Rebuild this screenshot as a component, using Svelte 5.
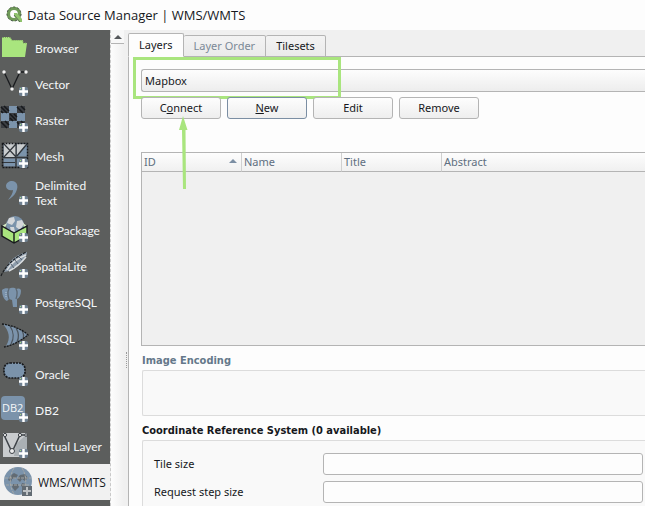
<script>
  const sources = [
    { id: 'browser', label: 'Browser' },
    { id: 'vector', label: 'Vector' },
    { id: 'raster', label: 'Raster' },
    { id: 'mesh', label: 'Mesh' },
    { id: 'text', label: 'Delimited Text' },
    { id: 'geopackage', label: 'GeoPackage' },
    { id: 'spatialite', label: 'SpatiaLite' },
    { id: 'postgres', label: 'PostgreSQL' },
    { id: 'mssql', label: 'MSSQL' },
    { id: 'oracle', label: 'Oracle' },
    { id: 'db2', label: 'DB2' },
    { id: 'virtual', label: 'Virtual Layer' },
    { id: 'wms', label: 'WMS/WMTS' }
  ];
  let current = $state('wms');
  let connection = $state('Mapbox');
</script>

<div class="window">
  <header>
    <svg class="logo" width="18" height="18" viewBox="0 0 18 18" aria-hidden="true">
      <circle cx="8" cy="8" r="5.6" fill="none" stroke="#6f9a58" stroke-width="3.4" />
      <circle cx="8" cy="8" r="7" fill="none" stroke="#4f5a50" stroke-width="1" stroke-dasharray="2 2" />
      <path d="M8 7h3l5 6v3h-3l-5-6z" fill="#8fc36c" />
      <path d="M8 9l6 7" stroke="#5c6b58" stroke-width="1" />
    </svg>
    <h1>Data Source Manager | WMS/WMTS</h1>
  </header>

  <div class="content">
    <nav aria-label="Data sources">
      {#each sources as s (s.id)}
        <button class="source" class:selected={current === s.id} onclick={() => (current = s.id)}>
          <svg width="28" height="28" viewBox="0 0 28 28" aria-hidden="true">
            {#if s.id === 'browser'}
              <path d="M1 4l1-1h7l2 3h11v3l4 0-2 14H1z" fill="#a9e57e" />
              <path d="M2 3.500h7l2 3h11v2.500h4" fill="none" stroke="#7fa861" stroke-dasharray="1 1" />
            {:else if s.id === 'vector'}
              <path d="M3 2l8 17 8-17h6" fill="none" stroke="#191b1e" stroke-width="1.300" />
              <g fill="#f2f2f2"><circle cx="3" cy="2" r="1.700" /><circle cx="11" cy="19" r="1.700" /><circle cx="18" cy="2" r="1.700" /><circle cx="25" cy="2" r="1.700" /></g>
            {:else if s.id === 'raster'}
              <path d="M0 0h24v22H0z" fill="#3b3e43" />
              <path d="M8 0h8v7H8zM0 7h8v8H0zM16 7h8v8h-8zM8 15h8v7H8z" fill="#7b93ab" />
              <path d="M0 1l6 6M3 0l5 5M0 5l2 2M16 1l6 6M20 0l4 4M9 8l6 6M9 12l3 3M13 8l3 3M0 16l6 6M4 15l4 4M16 16l6 6M20 15l4 4" stroke="#17191c" stroke-width="1.500" />
            {:else if s.id === 'mesh'}
              <path d="M2 1h25v24H2z" fill="#66727e" />
              <path d="M3 1h12v14H3z" fill="#c9ccce" />
              <path d="M16 14L26 2v12zM3 17h11v7H3zM16 17h10v7H16z" fill="#7b93ab" />
              <path d="M16 2h9L16 13z" fill="#c9ccce" />
              <path d="M3 2l12 13M15 2L3 15M16 14L26 2M15 1v24M2 15.500h25M2 20.500h12" fill="none" stroke="#33383d" stroke-width="1.200" />
              <rect x="1.500" y="1.500" width="25" height="24" fill="none" stroke="#15171a" stroke-width="1.500" stroke-dasharray="2 1" />
            {:else if s.id === 'text'}
              <path d="M11 2c5 0 7 5 4 11-2 4-5 6-8 8 3-4 5-7 5-10-4 1-7-1-7-4s3-5 6-5z" fill="#7b93ab" />
            {:else if s.id === 'geopackage'}
              <circle cx="14" cy="9" r="9" fill="#7b93ab" />
              <path d="M8 2l5-1 1 4-3 4-5-2zM16 5l5-1 2 4-4 6-4-3zM9 11l4 0 1 5-4-1z" fill="#d4d7da" />
              <path d="M1 11l12 6v10L1 20zM13 17l13-6v9l-13 7z" fill="#a9e57e" />
              <path d="M1 10l5-3-2 5zM26 10l-4-3 1 5z" fill="#d8edc8" />
              <path d="M1 10l12 7 13-7v10l-13 7-12-7zM13 17v10" fill="none" stroke="#17191c" stroke-width="1.400" />
            {:else if s.id === 'spatialite'}
              <path d="M3 20C7 9 16 2 26 0c0 6-7 15-18 19z" fill="#8d9cab" />
              <path d="M6 18C10 11 17 6 25 3M8 19C14 16 21 10 25 5" fill="none" stroke="#d9dcde" stroke-width="1.500" />
              <path d="M0 24C4 15 11 7 25 0" fill="none" stroke="#1c1f22" stroke-width="1.200" stroke-dasharray="3 1" />
              <path d="M10 12l3 4M14 8l3 4M18 5l3 3" stroke="#5c6875" />
            {:else if s.id === 'postgres'}
              <path d="M1 2c2-2 6-2 7-1 3-2 6-1 7 0 2-1 5-1 5 2 0 4-2 7-4 8v8h-4l-1-7-3-1-2 2C3 12 1 7 1 2z" fill="#7b93ab" />
              <path d="M8 1c-2 3-1 7 0 10M15 1c2 3 1 7 0 10" fill="none" stroke="#5b6772" stroke-width="1.300" />
              <path d="M5 4v5" stroke="#b7c6d4" stroke-dasharray="1 1" />
            {:else if s.id === 'mssql'}
              <path d="M2 0c5 1 17 4 25 11-8 6-14 9-22 11 5-8 3-15-3-22z" fill="#7b93ab" />
              <path d="M9 2c4 6 4 13 1 18M15 4c3 5 3 10 1 14M21 6c2 4 2 6 1 9" fill="none" stroke="#4d555d" stroke-width="1.300" />
              <path d="M1 0c9 1 20 5 26 11-6 5-14 10-24 12" fill="none" stroke="#15171a" stroke-width="1.300" stroke-dasharray="2 1" />
            {:else if s.id === 'oracle'}
              <rect x="3" y="3" width="21" height="15" rx="6" fill="#7b93ab" stroke="#17191c" stroke-width="1.700" stroke-dasharray="2 1" />
            {:else if s.id === 'db2'}
              <rect width="24" height="24" rx="4" fill="#7b93ab" />
              <text x="1" y="16" class="db">DB2</text>
            {:else if s.id === 'virtual'}
              <path d="M2 1h24v24H2z" fill="#c9ccce" />
              <path d="M15 12L26 2v22H13z" fill="#aab0b4" />
              <path d="M3 3l8 17 8-17h7" fill="none" stroke="#3d4247" stroke-width="1.500" />
              <g fill="#eee" stroke="#3d4247"><circle cx="4" cy="3" r="1.600" /><circle cx="11" cy="19" r="2.500" /><circle cx="19" cy="3" r="1.600" /><circle cx="25" cy="3" r="1.300" /></g>
            {:else}
              <circle cx="14" cy="13" r="14" fill="#7b93ab" />
              <path d="M6 8l4-3 4 2-2 3-4 1-1 3-3-2zM16 7l5-1 3 4-3 3-3-2-2 3-3-3zM9 16l5 0 1 3-4 4-3-4zM18 15l4 1-2 4-3-2z" fill="#626b73" />
              <path d="M1 10h26M2 17h24M10 0c-5 8-5 18 0 26M18 0c5 8 5 18 0 26" fill="none" stroke="#a5a8a7" stroke-width="1" stroke-dasharray="3 1" />
              <path d="M18 18h10v10H18z" fill="#626b73" />
            {/if}
            {#if s.id === 'wms'}
              <path d="M23 19v8M19 23h8" stroke="#bdc1c4" stroke-width="2" />
            {:else if s.id !== 'browser'}
              <rect x="18" y="17" width="9" height="9" rx="2" fill="#6f8192" />
              <path d="M22.500 17v9M18 21.500h9" stroke="#fff" stroke-width="2.500" />
              <path d="M19 18l1 1" stroke="#a9e57e" />
            {/if}
          </svg>
          <span>{s.label}</span>
        </button>
      {/each}
    </nav>

    <div class="scroll">
      <button class="up" aria-label="Scroll up"></button>
    </div>
    <div class="splitter"></div>

    <main>
      <div class="tabs" role="tablist">
        <button class="tab active" role="tab" aria-selected="true">Layers</button>
        <button class="tab" role="tab" aria-selected="false" disabled>Layer Order</button>
        <button class="tab" role="tab" aria-selected="false">Tilesets</button>
      </div>

      <div class="pane">
        <select aria-label="Connection" bind:value={connection}>
          <option>Mapbox</option>
        </select>
        <div class="mark"></div>
        <div class="actions">
          <button>C<u>o</u>nnect</button>
          <button class="default"><u>N</u>ew</button>
          <button>Edit</button>
          <button>Remove</button>
          <svg class="arrow" width="10" height="74" viewBox="0 0 10 74" aria-hidden="true">
            <path d="M4 0L8.500 14H6.500L7 73H4L3 14H0z" fill="#a9e57e" />
          </svg>
        </div>

        <div class="layers">
          <table>
            <thead>
              <tr><th>ID <i></i></th><th>Name</th><th>Title</th><th>Abstract</th></tr>
            </thead>
            <tbody></tbody>
          </table>
        </div>

        <h2 class="off">Image Encoding</h2>
        <div class="box encoding"></div>

        <h2>Coordinate Reference System (0 available)</h2>
        <div class="box form">
          <label for="tile">Tile size</label>
          <input id="tile" type="text" />
          <label for="step">Request step size</label>
          <input id="step" type="text" />
        </div>
      </div>
    </main>
  </div>
</div>

<style>
  :global(body) { margin: 0; background: #fdfdfd; }
  * { box-sizing: border-box; }
  .window {
    height: 100vh;
    display: flex;
    flex-direction: column;
    overflow: hidden;
    background: #fdfdfd;
    color: #16181c;
    font: 12px/16px "Noto Sans", "Open Sans", sans-serif;
  }
  button, input, select { font: inherit; color: inherit; margin: 0; }
  header { flex: none; height: 30px; padding-left: 6px; display: flex; align-items: center; gap: 3px; }
  h1 { margin: 0; font: 13px/20px "Open Sans", sans-serif; }
  .content { flex: 1; min-height: 0; display: flex; background: #f0f0f0; }

  nav { flex: none; width: 110px; background: #5c5e5d; overflow: hidden; }
  .source {
    width: 100%;
    min-height: 36px;
    padding: 4px 1px;
    border: 0;
    background: none;
    color: #f4f6f8;
    display: flex;
    align-items: center;
    gap: 6px;
    text-align: left;
    font: 12px/15px Lato, "Open Sans", sans-serif;
  }
  .source svg { flex: none; overflow: visible; }
  .source.selected { background: #f1f1f1; color: #16181c; padding-left: 4px; font-family: "Open Sans", sans-serif; }
  .db { font: 11px "Open Sans", sans-serif; fill: #f4f6f8; }

  .scroll { flex: none; width: 14px; border-left: 1px dashed #c9c9c9; background: linear-gradient(90deg, #fdfdfd, #f0f0f0); }
  .up { display: flex; justify-content: center; align-items: center; width: 100%; height: 14px; padding: 0; border: 0; border-bottom: 1px solid #b4b4b4; background: #f8f8f8; }
  .up::before { content: ""; border: 4px solid transparent; border-top: 0; border-bottom-color: #55585b; }
  .splitter { flex: none; align-self: center; width: 3px; height: 16px; margin: 184px 1px 0 0; border-right: 1px dotted #9a9a9a; }

  main { flex: 1; min-width: 0; display: flex; flex-direction: column; padding-top: 3px; }
  .tabs { flex: none; display: flex; align-items: flex-end; height: 24px; z-index: 1; }
  .tab {
    height: 22px;
    padding: 0 10px;
    border: 1px solid #b4b4b4;
    border-left: 0;
    border-radius: 2px 2px 0 0;
    background: linear-gradient(#f3f3f3, #ebebeb);
    line-height: 20px;
    font-size: 11px;
  }
  .tab:disabled { color: #7b8997; }
  .tab.active { height: 24px; border-left: 1px solid #b4b4b4; border-bottom-color: #fdfdfd; background: #fdfdfd; }
  .pane {
    flex: 1;
    min-height: 0;
    margin-top: -1px;
    padding: 12px 0 0 12px;
    border: 1px solid #b4b4b4;
    border-width: 1px 0 0 1px;
    background: #fdfdfd;
    position: relative;
    font-size: 11px;
  }
  select {
    display: block;
    appearance: none;
    width: 100%;
    height: 23px;
    padding: 0 3px;
    border: 1px solid #b4b4b4;
    border-right: 0;
    border-radius: 3px 0 0 3px;
    background: linear-gradient(#fdfdfd, #ededed);
  }
  .mark { position: absolute; left: 4px; top: 0; width: 208px; height: 42px; border: 3px solid #a9e57e; }
  .actions { display: flex; gap: 6px; margin-top: 5px; position: relative; }
  .actions button {
    width: 80px;
    height: 22px;
    padding: 0;
    border: 1px solid #b4b4b4;
    border-radius: 3px;
    background: linear-gradient(#fdfdfd, #eeeeee);
  }
  .actions .default { border-color: #7b8ea3; }
  .arrow { position: absolute; left: 38px; top: 19px; }

  .layers { height: 194px; margin-top: 33px; border: 1px solid #b4b4b4; border-right: 0; background: #f0f0f0; }
  table { width: 100%; table-layout: fixed; border-collapse: separate; border-spacing: 0; }
  th {
    width: 100px;
    height: 19px;
    padding: 0 2px;
    border-right: 1px solid #d0d0d0;
    border-bottom: 1px solid #b4b4b4;
    background: linear-gradient(#fdfdfd, #f0f0f0);
    color: #5f6f80;
    font-weight: 400;
    line-height: 18px;
    text-align: left;
  }
  th:last-child { width: auto; border-right: 0; }
  th i { float: right; margin: 6px 2px; border: 4px solid transparent; border-top: 0; border-bottom-color: #7b8ea3; }

  h2 { margin: 7px 0 1px 1px; font: 700 11px/16px "DejaVu Sans Condensed", "Noto Sans", sans-serif; }
  .off { color: #65788a; }
  .box { margin-left: 1px; border: 1px solid #dcdcdc; border-right: 0; border-radius: 2px 0 0 2px; background: #f9f9f9; }
  .encoding { height: 46px; }
  .form {
    display: grid;
    grid-template-columns: 169px 1fr;
    row-gap: 6px;
    align-items: center;
    padding: 12px 2px 20px 11px;
  }
  input { width: 100%; height: 22px; padding: 0 4px; border: 1px solid #b4b4b4; border-radius: 3px; background: #fdfdfd; }
</style>
